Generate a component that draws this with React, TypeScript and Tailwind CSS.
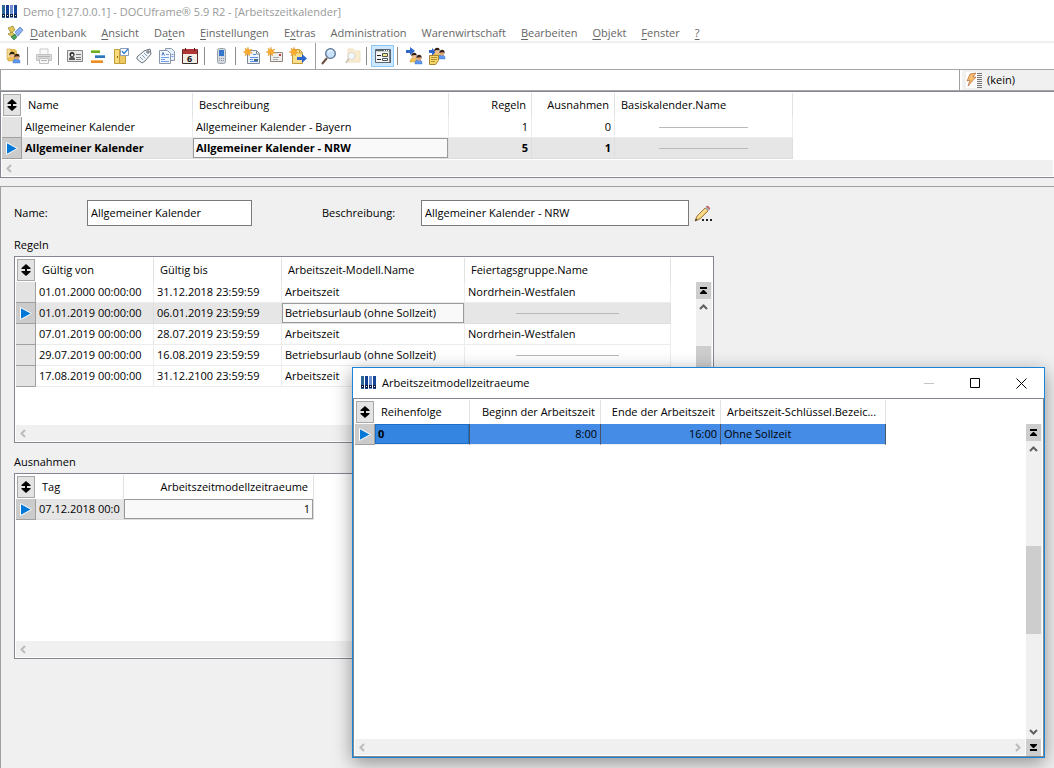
import type { ReactNode } from "react"

type Column = { label: string; width: number; right?: boolean }
type GridProps = {
    columns: Column[];
    rows: (string | null)[][];
    current: number;
    focus: number;
    variant?: "gray" | "bold" | "blue";
    vertical?: boolean;
    endArrow?: boolean;
    className?: string;
}

const menu = [
    ["", "D", "atenbank"],
    ["", "A", "nsicht"],
    ["Da", "t", "en"],
    ["", "E", "instellungen"],
    ["E", "x", "tras"],
    ["Administration", "", ""],
    ["Warenwirtschaft", "", ""],
    ["", "B", "earbeiten"],
    ["", "O", "bjekt"],
    ["", "F", "enster"],
    ["", "?", ""],
];

function Icon({ children, size = 18 }: { children: ReactNode; size?: number }) {
    return (
        <svg width={size} height={size} viewBox={`0 0 ${size} ${size}`} fill="none" aria-hidden="true" className="shrink-0">
            {children}
        </svg>
    );
}

function AppLogo() {
    return (
        <Icon size={16}>
            <path d="M0 1h3v13H0z" fill="#2c6695" />
            <path d="M4 1h3v13H4z" fill="#103f94" />
            <path d="M8 1h3v13H8z" fill="#6f8fce" />
            <path d="M12 1h3v13h-3z" fill="#17479b" />
            <path d="M0 10h3v3H0zM4 10h3v3H4zM8 10h3v3H8zM12 10h3v3h-3z" fill="#0b1f45" />
            <path d="M1 11h1v1H1zM5 11h1v1H5zM9 11h1v1H9zM13 11h1v1h-1z" fill="#dfe8f5" />
        </Icon>
    );
}

function People({ x, y }: { x: number; y: number }) {
    return (
        <g transform={`translate(${x} ${y})`}>
            <path d="M0 10c0-3 1-4 4-4s3 2 3 4z" fill="#f0c452" stroke="#b98b2a" strokeWidth=".4" />
            <path d="M5 12c0-4 1-4 4-4s3 2 3 4z" fill="#5c97f0" stroke="#2f66b8" strokeWidth=".4" />
            <circle cx="4" cy="4.500" r="2.200" fill="#f0bd8e" />
            <circle cx="9" cy="6.500" r="2.200" fill="#e0a577" />
            <path d="M1.300 4.500C1 2 2.500.800 4.200.800S7 2 6.500 4L5.500 3 2.500 3.200z" fill="#2b1c14" />
            <path d="M6.300 6.500C6 4 7.500 2.800 9.200 2.800S12 4 11.500 6.500l-1-1.300-3 .200z" fill="#3a2216" />
        </g>
    );
}

function Spark() {
    return <path d="M5 0l1 3 3-1-2 2.500L9.500 6 6.500 6.500 6.500 9 4.500 7 2 9l.500-3L0 5l2.500-1L2 1l2 1.500z" fill="#f8ab2c" stroke="#cf8420" strokeWidth=".3" />;
}

function ToolButton({ label, active, children }: { label: string; active?: boolean; children: ReactNode }) {
    return (
        <button
            type="button"
            aria-label={label}
            className={`flex h-[22px] w-[23px] items-center justify-center ${active ? "border border-[#90c8f6] bg-[#cce8ff]" : ""}`}
        >
            <Icon>{children}</Icon>
        </button>
    );
}

function Separator() {
    return <span className="mr-1 ml-[3px] h-[18px] w-px bg-[#8d8d8d]" />;
}

function Toolbar() {
    return (
        <div className="flex h-[26px] items-center bg-white pl-px">
            <ToolButton label="Benutzer">
                <path d="M3 2h8l2 2v9H3z" fill="#e6bd54" />
                <path d="M3 2h4v12l-4-2z" fill="#f6dc8d" stroke="#b88b2b" strokeWidth=".5" />
                <People x={4} y={4} />
            </ToolButton>
            <Separator />
            <ToolButton label="Drucken">
                <path d="M5 2h8v6H5z" fill="#fafafa" stroke="#c9c9c9" />
                <path d="M1.500 7.500h15v6h-15z" fill="#dcdcdc" stroke="#c2c2c2" />
                <path d="M4.500 11.500h9v5h-9z" fill="#f7f7f7" stroke="#c0c0c0" />
                <path d="M3 9.500h12M6 13.500h6" stroke="#b4b4b4" />
            </ToolButton>
            <Separator />
            <ToolButton label="Adressen">
                <path d="M1.500 3.500h15v11h-15z" fill="#e9e9e9" stroke="#858585" />
                <path d="M3 13c0-3 1-3 3-3s3 0 3 3z" fill="#555" />
                <circle cx="6" cy="7.500" r="2.500" fill="#2c2c2c" />
                <circle cx="6.200" cy="8" r="1.200" fill="#e7e7e7" />
                <path d="M10 7.500h5M10 10.500h5M10 12.500h5" stroke="#777" />
            </ToolButton>
            <ToolButton label="Projekte">
                <path d="M2 3h9v3H2z" fill="#6cab2a" />
                <path d="M6 8h10v3H6z" fill="#2e75b8" />
                <path d="M2 13h12v3H2z" fill="#ea8b25" />
                <path d="M2 3.500h9" stroke="#a7d65e" />
                <path d="M6 8.500h10" stroke="#64a4dc" />
                <path d="M2 13.500h12" stroke="#fbb765" />
            </ToolButton>
            <ToolButton label="Aufgaben">
                <path d="M2.500 2.500h5v14h-5z" fill="#f8dc7b" stroke="#c39b38" />
                <path d="M7.500 5.500h6v11h-6z" fill="#edc75f" stroke="#c39b38" />
                <path d="M5.500 9v2" stroke="#8a6a1c" />
                <path d="M8.500 1.500h8v7h-8z" fill="#fff" stroke="#8d9cb8" />
                <path d="M10 4l2 2.500 4-4.500" stroke="#2f7ed1" strokeWidth="1.300" />
            </ToolButton>
            <ToolButton label="Etiketten">
                <path d="M2 10l7-6 6-2 1 5-6 7-3 2-5-4z" fill="#f4f6f8" stroke="#66717c" />
                <circle cx="13" cy="5" r="1.200" stroke="#54606c" />
                <path d="M5 10l3 3M7 8l3 3M9 6l3 3" stroke="#7b9fc4" />
            </ToolButton>
            <ToolButton label="Dokumente">
                <path d="M7.500 1.500h6l3 3v9h-9z" fill="#e6effc" stroke="#8c98a9" />
                <path d="M1.500 3.500h8l3 3v10h-11z" fill="#f3f8ff" stroke="#8c98a9" />
                <path d="M8 7.500h3M3 10.500h8M3 12.500h4M3 14.500h8M13.500 7.500h2M13.500 9.500h2" stroke="#709ee7" />
                <path d="M4 8.500l1-3 1.500 3" stroke="#3f6fc4" />
            </ToolButton>
            <ToolButton label="Kalender">
                <path d="M1.500 2.500h15v14h-15z" fill="#f1eee6" stroke="#5f2b25" />
                <path d="M2 2h14v5H2z" fill="#b13737" />
                <path d="M4.500 1v3M13.500 1v3" stroke="#571a1a" />
                <path d="M2 16.500h14" stroke="#333" />
                <text x="6" y="15" fontSize="9" fontWeight="700" fill="#111" fontFamily="Open Sans, sans-serif">6</text>
            </ToolButton>
            <Separator />
            <ToolButton label="Telefon">
                <rect x="5.500" y="1.500" width="8" height="15" rx="2" fill="#d3d9df" stroke="#98a2ac" />
                <path d="M7 3h5v6H7z" fill="#3477cc" />
                <path d="M7 11.500h5M7 13.500h5" stroke="#909aa3" strokeDasharray="1 1" />
            </ToolButton>
            <Separator />
            <ToolButton label="Neues Dokument">
                <path d="M4.500 3.500h9l3 3v10h-12z" fill="#edf4ff" stroke="#7d8997" />
                <path d="M13.500 4v3h3" stroke="#7d8997" />
                <path d="M10 7.500h3M7 10.500h8M7 12.500h3M7 14.500h8" stroke="#5a8ddd" />
                <path d="M11 12h4v2h-4z" fill="#49677f" />
                <Spark />
            </ToolButton>
            <ToolButton label="Neue E-Mail">
                <path d="M4.500 5.500h12v9h-12z" fill="#eee" stroke="#92867b" />
                <path d="M13 7h2v2h-2z" fill="#c43b39" />
                <path d="M7 10.500h6M7 12.500h5" stroke="#aaa" />
                <Spark />
            </ToolButton>
            <ToolButton label="Neue Ablage">
                <path d="M3.500 2.500h7l3 3v11h-10z" fill="#f8df8c" stroke="#c4993e" />
                <path d="M10.500 3v3h3" stroke="#c4993e" />
                <path d="M8 10h5V7l5 4.500-5 4.500v-3H8z" fill="#2d66cf" />
                <Spark />
            </ToolButton>
            <span className="mr-px ml-[6px] h-full w-px bg-[#a0a0a0]" />
            <ToolButton label="Suchen">
                <path d="M7 11l-5 6" stroke="#695142" strokeWidth="2" />
                <circle cx="10.500" cy="6.500" r="4.800" fill="#c7e2fb" stroke="#58708d" strokeWidth="1.300" />
                <path d="M8 6c0-2 2-3 4-2" stroke="#fff" />
            </ToolButton>
            <ToolButton label="Erweiterte Suche">
                <g opacity=".4">
                    <path d="M5 2h5l2 2h5v11H5z" fill="#f1cf86" stroke="#dcb871" />
                    <path d="M6 11l-3 5" stroke="#8a7565" strokeWidth="2" />
                    <circle cx="8.500" cy="9" r="3.500" fill="#e2eefa" stroke="#a3978a" />
                </g>
            </ToolButton>
            <Separator />
            <ToolButton label="Formularansicht" active>
                <path d="M1.500 2.500h15v13h-15z" fill="#f5f5f5" stroke="#5e6872" />
                <path d="M2 3.500h14M16 3v13" stroke="#59636c" strokeWidth="1.500" />
                <path d="M10 3.500h1M12 3.500h1M14 3.500h1" stroke="#fff" />
                <path d="M3 8.500h4M3 12.500h4" stroke="#222" />
                <path d="M8.500 6.500h5v3h-5z" fill="#f7e68b" stroke="#4b5358" />
                <path d="M8.500 11.500h5v2h-5z" fill="#fff" stroke="#4b5358" />
            </ToolButton>
            <Separator />
            <ToolButton label="Benutzer zuordnen">
                <path d="M1 3h4V0l5 4-5 4V6H1z" fill="#2e66cc" />
                <People x={5} y={5} />
            </ToolButton>
            <ToolButton label="Notiz zuordnen">
                <path d="M1 3h3V1l4 4-4 4V6H1z" fill="#2e66cc" />
                <People x={5} y={0} />
                <path d="M1.500 8.500h9v5l-3 4h-6z" fill="#f7d96b" stroke="#a78033" />
                <path d="M3 10.500h6M3 12.500h6M3 14.500h4" stroke="#b28a2f" />
            </ToolButton>
        </div>
    );
}

const chevrons = {
    left: "M6 1L2.500 4.500L6 8",
    right: "M3 1L6.500 4.500L3 8",
    up: "M1 6L4.500 2.500L8 6",
    down: "M1 3L4.500 6.500L8 3",
};

function ScrollArrow({ direction }: { direction: keyof typeof chevrons }) {
    const horizontal = direction === "left" || direction === "right";

    return (
        <button type="button" aria-label={`scroll ${direction}`} className={`flex h-4 w-[15px] items-center justify-center ${horizontal ? "text-[#bcbcbc]" : "text-[#606060]"}`}>
            <Icon size={9}>
                <path d={chevrons[direction]} stroke="currentColor" strokeWidth="2" />
            </Icon>
        </button>
    );
}

function EdgeButton({ end }: { end?: boolean }) {
    return (
        <button type="button" aria-label={end ? "last row" : "first row"} className="flex h-[17px] w-[15px] items-center justify-center bg-[#cdcdcd]">
            <Icon size={9}>
                <path d={end ? "M1 1h7v1L5 5H4L1 2zM1 6h7v2H1z" : "M1 1h7v2H1zM4 4h1l3 3v1H1V7z"} fill="#000" />
            </Icon>
        </button>
    );
}

function Grid({ columns, rows, current, focus, variant = "gray", vertical, endArrow, className = "" }: GridProps) {
    const blue = variant === "blue";
    const total = columns.reduce((sum, column) => sum + column.width, 20);

    return (
        <div className={`flex flex-col border border-[#828790] bg-white p-px ${className}`}>
            <div className="flex min-h-0 flex-1 overflow-hidden">
                <div className="min-w-0 flex-1 overflow-hidden">
                    <table className="table-fixed border-separate border-spacing-0" style={{ width: total }}>
                        <colgroup>
                            <col className="w-5" />
                            {columns.map((column) => <col key={column.label} style={{ width: column.width }} />)}
                        </colgroup>
                        <thead>
                            <tr className="h-6">
                                <th className="p-0">
                                    <button type="button" aria-label="Sortierung" className="ml-px flex h-[22px] w-[18px] items-center justify-center border border-[#a8a8a8] bg-[#e3e3e3]">
                                        <Icon size={14}>
                                            <path d="M7 1l4.500 4v1H8v2h3.500v1L7 13 2.500 9V8H6V6H2.500V5z" fill="#000" />
                                        </Icon>
                                    </button>
                                </th>
                                {columns.map((column) => (
                                    <th
                                        key={column.label}
                                        className={`overflow-hidden border-r border-[#e2e2e2] py-0 pr-[5px] pl-[6px] font-normal whitespace-nowrap ${column.right ? "text-right" : "text-left"}`}
                                    >
                                        {column.label}
                                    </th>
                                ))}
                            </tr>
                        </thead>
                        <tbody>
                            {rows.map((row, r) => {
                                const selected = r === current;
                                const fill = !selected ? "border-[#ececec]" : blue ? "border-r-[#4a5568] border-b-[#ececec] bg-[#448ce6]" : "border-[#dedede] bg-[#e6e6e6]";

                                return (
                                    <tr key={r} className={`h-[21px] ${selected && variant === "bold" ? "font-bold" : ""}`}>
                                        <td className={`border-r border-b border-[#a0a0a0] p-0 ${selected ? "bg-[#cbcbcb]" : "bg-[#e3e3e3]"}`}>
                                            {selected && (
                                                <Icon size={18}>
                                                    <path d="M4.500 3.500L15.500 9.500L4.500 15.500z" fill="#0078d7" stroke="#fff" />
                                                </Icon>
                                            )}
                                        </td>
                                        {row.map((value, c) => {
                                            const focused = selected && c === focus;
                                            const box = blue ? "border-[#1a6fc9] bg-[#3385e1] font-bold" : "border-[#9a9a9a] bg-[#f9f9f9]";

                                            return (
                                                <td key={c} className={`overflow-hidden border-r border-b p-0 ${fill} ${columns[c].right ? "text-right" : ""}`}>
                                                    {value === null ? (
                                                        <div className="mx-auto h-px w-1/2 bg-[#b9b9b9]" />
                                                    ) : (
                                                        <div className={`h-5 border px-[2px] leading-[18px] whitespace-nowrap ${focused ? box : "border-transparent"}`}>
                                                            <div className="overflow-hidden">{value}</div>
                                                        </div>
                                                    )}
                                                </td>
                                            );
                                        })}
                                    </tr>
                                );
                            })}
                        </tbody>
                    </table>
                </div>
                {vertical && (
                    <div className="mt-6 flex w-4 flex-col bg-[#f0f0f0]">
                        <EdgeButton />
                        <ScrollArrow direction="up" />
                        <div className="flex-1" />
                        <div className="w-[15px] flex-1 bg-[#cdcdcd]" />
                        <div className="flex-1" />
                        <ScrollArrow direction="down" />
                    </div>
                )}
            </div>
            <div className="flex h-4 shrink-0">
                <div className="flex flex-1 justify-between bg-[#f0f0f0]">
                    <ScrollArrow direction="left" />
                    {endArrow && <ScrollArrow direction="right" />}
                </div>
                {vertical && <div className="ml-px w-4"><EdgeButton end /></div>}
            </div>
        </div>
    );
}

function PeriodWindow() {
    return (
        <section aria-label="Arbeitszeitmodellzeitraeume" className="absolute top-[367px] left-[352px] flex h-[391px] w-[693px] flex-col border border-[#1883d7] bg-white shadow-[0_5px_18px_rgba(0,0,0,0.4)]">
            <div className="flex h-[30px] shrink-0 items-center pl-2">
                <AppLogo />
                <h2 className="ml-[5px] flex-1">Arbeitszeitmodellzeitraeume</h2>
                <button type="button" aria-label="Minimieren" className="flex h-full w-[46px] items-center justify-center text-[#c4c4c4]">
                    <Icon size={11}><path d="M0 5.500h10" stroke="currentColor" /></Icon>
                </button>
                <button type="button" aria-label="Maximieren" className="flex h-full w-[46px] items-center justify-center">
                    <Icon size={11}><path d="M.500.500h9v9h-9z" stroke="#000" /></Icon>
                </button>
                <button type="button" aria-label="Schließen" className="flex h-full w-[46px] items-center justify-center">
                    <Icon size={11}><path d="M.500.500l10 10M10.500.500l-10 10" stroke="#000" /></Icon>
                </button>
            </div>
            <Grid
                className="min-h-0 flex-1"
                variant="blue"
                vertical
                endArrow
                current={0}
                focus={0}
                columns={[
                    { label: "Reihenfolge", width: 95 },
                    { label: "Beginn der Arbeitszeit", width: 131, right: true },
                    { label: "Ende der Arbeitszeit", width: 120, right: true },
                    { label: "Arbeitszeit-Schlüssel.Bezeic...", width: 165 },
                ]}
                rows={[["0", "8:00", "16:00", "Ohne Sollzeit"]]}
            />
        </section>
    );
}

function App() {
    return (
        <div className="relative flex min-h-screen flex-col overflow-hidden bg-[#f0f0f0] font-['Open_Sans',sans-serif] text-[11px] leading-4 text-black">
            <header className="bg-white">
                <div className="flex h-6 items-center pl-[2px] text-[#999]">
                    <AppLogo />
                    <h1 className="ml-[5px]">Demo [127.0.0.1] - DOCUframe® 5.9 R2 - [Arbeitszeitkalender]</h1>
                </div>
                <nav className="flex h-[19px] items-center border-b-2 border-[#f0f0f0] pl-[7px] text-[#666]">
                    <Icon size={16}>
                        <path d="M1 3l5-2 2 4-4 3z" fill="#e0c75a" stroke="#87701e" strokeWidth=".6" />
                        <path d="M8 7l5-5 3 3-5 6z" fill="#8db3f5" stroke="#3767b1" strokeWidth=".6" />
                        <path d="M1 9l4-2 3 3-3 2z" fill="#e0c75a" stroke="#87701e" strokeWidth=".6" />
                        <path d="M4 12l4-3 2 3-3 3z" fill="#4ba05e" stroke="#24663b" strokeWidth=".6" />
                    </Icon>
                    <div className="ml-[7px] flex gap-[15px]">
                        {menu.map(([before, key, after]) => (
                            <button type="button" key={before + key + after}>
                                {before}<span className="underline underline-offset-2">{key}</span>{after}
                            </button>
                        ))}
                    </div>
                </nav>
                <Toolbar />
            </header>

            {/* Filter line */}
            <div className="flex h-[22px] border-y border-[#a6a6a6]">
                <input aria-label="Filter" className="min-w-0 flex-1 border-x border-[#a0a0a0] bg-white px-1 outline-none" />
                <button type="button" className="flex w-[94px] items-center border-l-2 border-white pl-[3px]">
                    <Icon>
                        <path d="M1 1h11v16H1z" fill="#fff" />
                        <path d="M5 3l6-1-3 4 3 0-8 9 2-6-3 1z" fill="#f7bd6c" stroke="#a8562e" strokeWidth=".6" />
                        <path d="M12 2.500h5M12 4.500h5M12 6.500h5M12 8.500h5M12 10.500h5M12 12.500h5M12 14.500h5M12 16.500h5" stroke="#777" />
                    </Icon>
                    <span className="ml-1">(kein)</span>
                </button>
            </div>

            <Grid
                className="h-[87px] border-r-0"
                variant="bold"
                current={1}
                focus={1}
                columns={[
                    { label: "Name", width: 171 },
                    { label: "Beschreibung", width: 256 },
                    { label: "Regeln", width: 83, right: true },
                    { label: "Ausnahmen", width: 83, right: true },
                    { label: "Basiskalender.Name", width: 178 },
                ]}
                rows={[
                    ["Allgemeiner Kalender", "Allgemeiner Kalender - Bayern", "1", "0", null],
                    ["Allgemeiner Kalender", "Allgemeiner Kalender - NRW", "5", "1", null],
                ]}
            />

            <main className="mt-2 flex-1 border-t border-l border-[#a0a0a0] pt-[13px] pl-[13px]">
                <form className="flex items-center">
                    <label htmlFor="name" className="w-[73px]">Name:</label>
                    <input id="name" defaultValue="Allgemeiner Kalender" className="h-[26px] w-[165px] border border-[#7a7a7a] bg-white px-[3px] pb-[2px] outline-none" />
                    <label htmlFor="description" className="ml-[70px] w-[99px]">Beschreibung:</label>
                    <input id="description" defaultValue="Allgemeiner Kalender - NRW" className="h-[26px] w-[268px] border border-[#7a7a7a] bg-white px-[3px] pb-[2px] outline-none" />
                    <button type="button" aria-label="Bearbeiten" className="ml-[5px]">
                        <Icon>
                            <path d="M1 17l2-5 8-8 3 3-8 8z" fill="#f3cf73" stroke="#8b6330" strokeWidth=".8" />
                            <path d="M4 13.500l8-8" stroke="#fff0b5" />
                            <path d="M11 4l1.500-1.500 3 3L14 7z" fill="#a9b0b4" />
                            <path d="M12.500 2.500c1-1.500 4 1.500 3 3z" fill="#d9646c" stroke="#b9545c" strokeWidth=".6" />
                            <path d="M1 17l1-2.500 1.500 1.500z" fill="#333" />
                            <path d="M8 15h2v2H8zM12 15h2v2h-2zM16 15h2v2h-2z" fill="#222" />
                        </Icon>
                    </button>
                </form>

                <h2 className="mt-[11px] mb-[3px]">Regeln</h2>
                <Grid
                    className="h-[187px] max-w-[700px]"
                    vertical
                    endArrow
                    current={1}
                    focus={2}
                    columns={[
                        { label: "Gültig von", width: 118 },
                        { label: "Gültig bis", width: 128 },
                        { label: "Arbeitszeit-Modell.Name", width: 183 },
                        { label: "Feiertagsgruppe.Name", width: 206 },
                    ]}
                    rows={[
                        ["01.01.2000 00:00:00", "31.12.2018 23:59:59", "Arbeitszeit", "Nordrhein-Westfalen"],
                        ["01.01.2019 00:00:00", "06.01.2019 23:59:59", "Betriebsurlaub (ohne Sollzeit)", null],
                        ["07.01.2019 00:00:00", "28.07.2019 23:59:59", "Arbeitszeit", "Nordrhein-Westfalen"],
                        ["29.07.2019 00:00:00", "16.08.2019 23:59:59", "Betriebsurlaub (ohne Sollzeit)", null],
                        ["17.08.2019 00:00:00", "31.12.2100 23:59:59", "Arbeitszeit", ""],
                    ]}
                />

                <h2 className="mt-[11px] mb-[3px]">Ausnahmen</h2>
                <Grid
                    className="h-[186px] max-w-[700px]"
                    current={0}
                    focus={1}
                    columns={[
                        { label: "Tag", width: 88 },
                        { label: "Arbeitszeitmodellzeitraeume", width: 190, right: true },
                    ]}
                    rows={[["07.12.2018 00:00:00", "1"]]}
                />
            </main>

            <PeriodWindow />
        </div>
    );
}

export default App
